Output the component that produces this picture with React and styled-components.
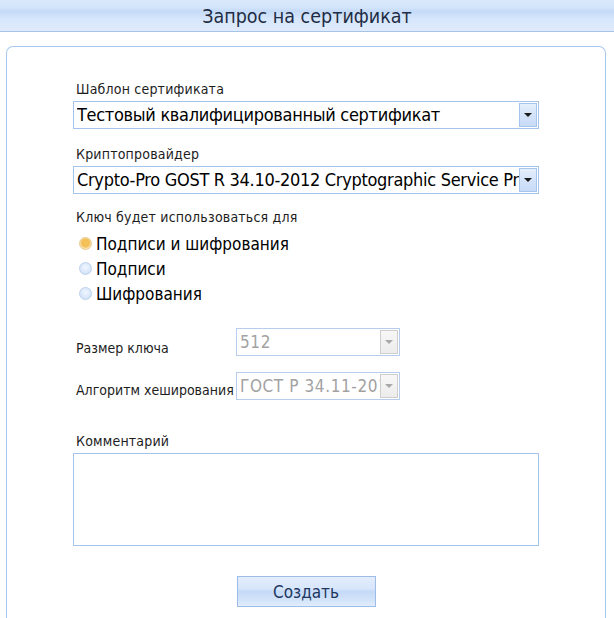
import React from "react";
import styled, { createGlobalStyle } from "styled-components";

const Global = createGlobalStyle`
  html, body { margin: 0; padding: 0; background: #fff; }
  body { font-family: Tahoma, "DejaVu Sans Condensed", "DejaVu Sans", sans-serif; color: #1a1a1a; }
  * { box-sizing: border-box; }
`;

const Page = styled.div`
  width: 614px;
  height: 618px;
  overflow: hidden;
`;

const Header = styled.div`
  height: 32px;
  display: flex;
  align-items: center;
  justify-content: center;
  border-bottom: 1px solid #a6c3ea;
  background: linear-gradient(#dbe9fc 0%, #d3e4fa 25%, #c4daf7 36%, #d6e6fb 60%, #e0ecfc 100%);
  font-size: 19.5px;
  color: #1f2d44;
  padding-top: 1px;
`;

const Panel = styled.div`
  margin: 14px 8px 0 6px;
  border: 1px solid #a9c8f0;
  border-bottom: none;
  border-radius: 7px 7px 0 0;
  padding: 34px 66px 0 66px;
  height: 620px;
  display: flex;
  flex-direction: column;
`;

const Label = styled.div`
  font-size: 14px;
  letter-spacing: 0.2px;
  line-height: 16px;
  color: #1d1d1d;
  padding-left: 3px;
  margin-top: ${(p) => p.$mt || 0}px;
  margin-bottom: 4px;
`;

const SelectBox = styled.div`
  width: ${(p) => p.$w}px;
  height: 28px;
  border: 1px solid ${(p) => (p.$disabled ? "#b6cdee" : "#a4c3ed")};
  background: #fff;
  display: flex;
  align-items: center;
  padding: 0 1px 0 3px;
  overflow: hidden;
`;

const SelectText = styled.div`
  flex: 1;
  min-width: 0;
  white-space: nowrap;
  overflow: hidden;
  font-size: ${(p) => (p.$small ? 17 : 18)}px;
  letter-spacing: ${(p) => (p.$small ? "0.6px" : "-0.3px")};
  color: ${(p) => (p.$disabled ? "#a2a2a2" : "#000")};
  line-height: 26px;
`;

const ArrowBtn = styled.div`
  width: 18px;
  height: 24px;
  flex: none;
  border: 1px solid ${(p) => (p.$disabled ? "#cfcfcf" : "#a6c4ec")};
  background: ${(p) =>
    p.$disabled
      ? "linear-gradient(#f7f7f7, #ececec)"
      : "linear-gradient(#e6effc 0%, #d3e3f9 50%, #c8dbf6 100%)"};
  display: flex;
  align-items: center;
  justify-content: center;
  &::after {
    content: "";
    width: 0;
    height: 0;
    border-left: 4px solid transparent;
    border-right: 4px solid transparent;
    border-top: 4px solid ${(p) => (p.$disabled ? "#a8a8a8" : "#1a1a1a")};
  }
`;

const RadioList = styled.div`
  display: flex;
  flex-direction: column;
  margin-top: 2px;
`;

const RadioRow = styled.div`
  height: 25px;
  display: flex;
  align-items: center;
  gap: 4px;
  padding-left: 6px;
  font-size: 17px;
  color: #000;
`;

const RadioDot = styled.span`
  width: 13px;
  height: 13px;
  border-radius: 50%;
  flex: none;
  border: 1px solid ${(p) => (p.$checked ? "#e6c98a" : "#bcd0ec")};
  background: ${(p) =>
    p.$checked
      ? "radial-gradient(circle at 50% 45%, #f7c55a 0%, #f3bd55 45%, #fbe6b8 70%, #fdf3de 100%)"
      : "radial-gradient(circle at 50% 40%, #f0f6fe 0%, #dbe8fa 55%, #c9dbf4 100%)"};
`;

const PairRow = styled.div`
  display: flex;
  align-items: flex-end;
  margin-top: ${(p) => p.$mt}px;
`;

const PairLabel = styled.div`
  width: 163px;
  font-size: 14px;
  line-height: 16px;
  padding-left: 3px;
  padding-bottom: ${(p) => p.$pb || 0}px;
  color: #1d1d1d;
  white-space: nowrap;
`;

const TextArea = styled.div`
  width: 466px;
  height: 93px;
  border: 1px solid #a4c3ed;
  background: #fff;
`;

const ButtonRow = styled.div`
  display: flex;
  justify-content: center;
  margin-top: 30px;
`;

const Button = styled.div`
  width: 139px;
  height: 31px;
  border: 1px solid #9dbde8;
  background: linear-gradient(#e3edfc 0%, #d8e6fb 40%, #c5daf7 50%, #d3e4fa 80%, #e2edfc 100%);
  display: flex;
  align-items: center;
  justify-content: center;
  font-size: 17px;
  color: #1e3560;
`;

function Select({ value, width, disabled, small }) {
  return (
    <SelectBox $w={width} $disabled={disabled}>
      <SelectText $disabled={disabled} $small={small}>{value}</SelectText>
      <ArrowBtn $disabled={disabled} />
    </SelectBox>
  );
}

export default function App() {
  return (
    <Page>
      <Global />
      <Header>Запрос на сертификат</Header>
      <Panel>
        <Label>Шаблон сертификата</Label>
        <Select width={466} value="Тестовый квалифицированный сертификат" />
        <Label $mt={17}>Криптопровайдер</Label>
        <Select width={466} value="Crypto-Pro GOST R 34.10-2012 Cryptographic Service Provider" />
        <Label $mt={15}>Ключ будет использоваться для</Label>
        <RadioList>
          <RadioRow><RadioDot $checked />Подписи и шифрования</RadioRow>
          <RadioRow><RadioDot />Подписи</RadioRow>
          <RadioRow><RadioDot />Шифрования</RadioRow>
        </RadioList>
        <PairRow $mt={22}>
          <PairLabel $pb={0}>Размер ключа</PairLabel>
          <Select width={164} value="512" disabled small />
        </PairRow>
        <PairRow $mt={16}>
          <PairLabel $pb={2}>Алгоритм хеширования</PairLabel>
          <Select width={164} value="ГОСТ Р 34.11-2012 256 бит" disabled small />
        </PairRow>
        <Label $mt={33}>Комментарий</Label>
        <TextArea />
        <ButtonRow>
          <Button>Создать</Button>
        </ButtonRow>
      </Panel>
    </Page>
  );
}
